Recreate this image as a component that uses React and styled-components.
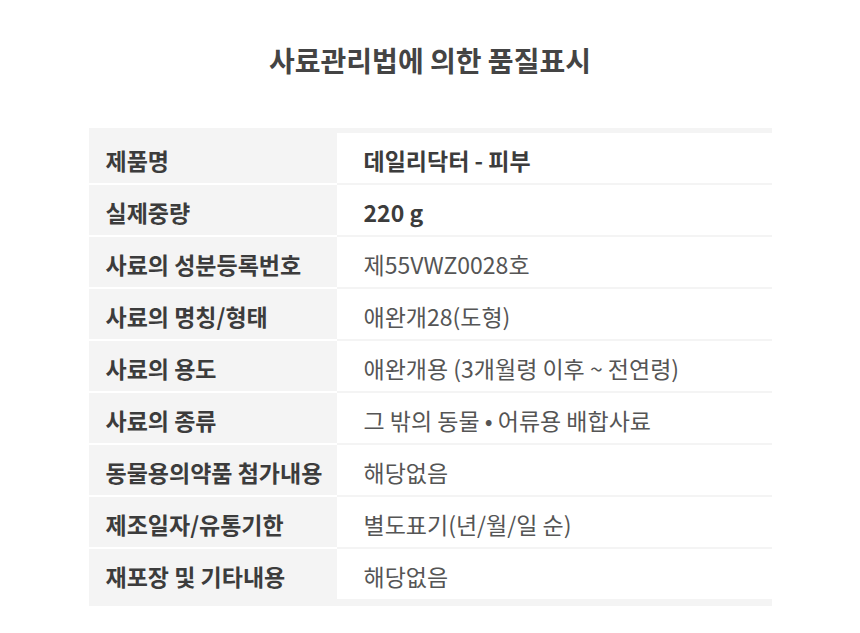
import React from "react";
import styled, { createGlobalStyle } from "styled-components";

const Global = createGlobalStyle`
  html, body { margin: 0; padding: 0; background: #ffffff; }
  body { font-family: "Noto Sans CJK KR", "Noto Sans", sans-serif; }
`;

const Page = styled.div`
  width: 860px;
  min-height: 633px;
  background: #ffffff;
  display: flex;
  flex-direction: column;
  align-items: center;
`;

const Title = styled.h1`
  margin: 0;
  padding: 46px 0 54px;
  font-size: 28px;
  line-height: 28px;
  font-weight: 700;
  color: #444444;
`;

const Table = styled.div`
  width: 683px;
  background: #f4f4f4;
  padding: 5px 0 5px;
  display: flex;
  flex-direction: column;
`;

const Row = styled.div`
  display: grid;
  grid-template-columns: 248px 1fr;
  height: 52px;
`;

const Label = styled.div`
  display: flex;
  align-items: center;
  padding: 3px 0 0 17px;
  font-size: 23px;
  font-weight: 700;
  color: #3c3c3c;
  background: #f4f4f4;
  white-space: nowrap;
  border-bottom: 2px solid ${(p) => (p.$last ? "#f4f4f4" : "#ffffff")};
`;

const Value = styled.div`
  display: flex;
  align-items: center;
  padding: 3px 0 0 27px;
  font-size: 23px;
  font-weight: ${(p) => (p.$bold ? 700 : 400)};
  color: ${(p) => (p.$bold ? "#3c3c3c" : "#555555")};
  background: #ffffff;
  white-space: nowrap;
  border-bottom: 2px solid #f4f4f4;
`;

const rows = [
  ["제품명", "데일리닥터 - 피부", true],
  ["실제중량", "220 g", true],
  ["사료의 성분등록번호", "제55VWZ0028호", false],
  ["사료의 명칭/형태", "애완개28(도형)", false],
  ["사료의 용도", "애완개용 (3개월령 이후 ~ 전연령)", false],
  ["사료의 종류", "그 밖의 동물 • 어류용 배합사료", false],
  ["동물용의약품 첨가내용", "해당없음", false],
  ["제조일자/유통기한", "별도표기(년/월/일 순)", false],
  ["재포장 및 기타내용", "해당없음", false],
];

export default function App() {
  return (
    <>
      <Global />
      <Page>
        <Title>사료관리법에 의한 품질표시</Title>
        <Table>
          {rows.map(([k, v, b], i) => (
            <Row key={k}>
              <Label $last={i === rows.length - 1}>{k}</Label>
              <Value $bold={b}>{v}</Value>
            </Row>
          ))}
        </Table>
      </Page>
    </>
  );
}
